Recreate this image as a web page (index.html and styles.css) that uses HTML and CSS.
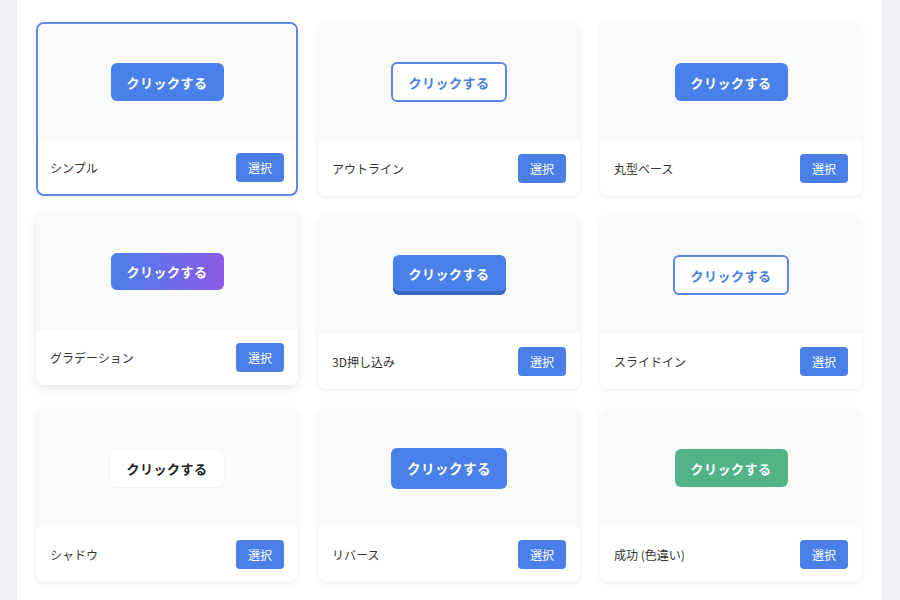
FILE: index.html
```html
<!DOCTYPE html>
<html lang="ja">
<head>
    <meta charset="UTF-8">
    <meta name="viewport" content="width=device-width, initial-scale=1.0">
    <title>ボタンデザイン選択</title>
    <link rel="stylesheet" href="styles.css">
</head>
<body>
    <div class="panel">
        <div class="grid">
            <div class="card selected">
                <div class="preview"><button class="demo simple">クリックする</button></div>
                <div class="card-footer"><span>シンプル</span><button class="select">選択</button></div>
            </div>
            <div class="card">
                <div class="preview"><button class="demo outline">クリックする</button></div>
                <div class="card-footer"><span>アウトライン</span><button class="select">選択</button></div>
            </div>
            <div class="card">
                <div class="preview"><button class="demo simple">クリックする</button></div>
                <div class="card-footer"><span>丸型ベース</span><button class="select">選択</button></div>
            </div>
            <div class="card hover">
                <div class="preview"><button class="demo gradient">クリックする</button></div>
                <div class="card-footer"><span>グラデーション</span><button class="select">選択</button></div>
            </div>
            <div class="card">
                <div class="preview"><button class="demo push">クリックする</button></div>
                <div class="card-footer"><span>3D押し込み</span><button class="select">選択</button></div>
            </div>
            <div class="card">
                <div class="preview"><button class="demo outline">クリックする</button></div>
                <div class="card-footer"><span>スライドイン</span><button class="select">選択</button></div>
            </div>
            <div class="card">
                <div class="preview"><button class="demo shadow">クリックする</button></div>
                <div class="card-footer"><span>シャドウ</span><button class="select">選択</button></div>
            </div>
            <div class="card">
                <div class="preview"><button class="demo simple reverse">クリックする</button></div>
                <div class="card-footer"><span>リバース</span><button class="select">選択</button></div>
            </div>
            <div class="card">
                <div class="preview"><button class="demo success">クリックする</button></div>
                <div class="card-footer"><span>成功 (色違い)</span><button class="select">選択</button></div>
            </div>
        </div>
    </div>
</body>
</html>
```

FILE: styles.css
```css
body {
    margin: 0;
    background: #eef0f5;
    font-family: "Noto Sans CJK JP", "Noto Sans", sans-serif;
}
.panel {
    width: 865px;
    height: 600px;
    margin-left: 17px;
    padding: 23px 20px 0 19px;
    box-sizing: border-box;
    background: #fff;
}
.grid {
    display: grid;
    grid-template-columns: repeat(3, 1fr);
    gap: 20px;
}
.card {
    height: 173px;
    box-sizing: border-box;
    display: flex;
    flex-direction: column;
    background: #fff;
    border-radius: 8px;
    overflow: hidden;
    box-shadow: 0 1px 5px rgba(0, 0, 0, 0.08);
}
.card.selected {
    height: 174px;
    margin-top: -1px;
    border: 2px solid #5f8ae0;
}
.card.hover {
    transform: translateY(-4px);
    box-shadow: 0 3px 10px rgba(0, 0, 0, 0.1);
}
.preview {
    flex: 1;
    display: flex;
    align-items: center;
    justify-content: center;
    background: #f7f9fb;
}
.card-footer {
    height: 55px;
    flex-shrink: 0;
    display: flex;
    align-items: center;
    justify-content: space-between;
    padding: 0 14px 0 14px;
    font-size: 12px;
    color: #333;
}
.selected .card-footer {
    height: 54px;
    padding: 0 12px 0 12px;
}
.select {
    width: 48px;
    height: 29px;
    border: none;
    border-radius: 4px;
    background: #4a7fe8;
    color: #fff;
    font-family: inherit;
    font-size: 12px;
    cursor: pointer;
}
.demo {
    width: 113px;
    height: 38px;
    border: none;
    border-radius: 6px;
    font-family: inherit;
    font-size: 13px;
    font-weight: bold;
    letter-spacing: 0.5px;
    color: #fff;
    cursor: pointer;
}
.simple {
    background: #4a80ea;
}
.reverse {
    width: 116px;
    height: 41px;
    font-size: 13.5px;
}
.outline {
    width: 116px;
    height: 40px;
    background: #fff;
    border: 2px solid #5b87e0;
    color: #4a7fe0;
}
.gradient {
    height: 37px;
    background: linear-gradient(90deg, #4a80ea, #8a5ae6);
}
.push {
    height: 36px;
    background: #4a80ea;
    box-shadow: 0 4px 0 #3a66c4;
    margin-bottom: 4px;
    margin-top: 0;
}
.shadow {
    height: 37px;
    background: #fff;
    color: #222;
    box-shadow: 0 1px 3px rgba(0, 0, 0, 0.05);
}
.success {
    background: #52b386;
}
```
